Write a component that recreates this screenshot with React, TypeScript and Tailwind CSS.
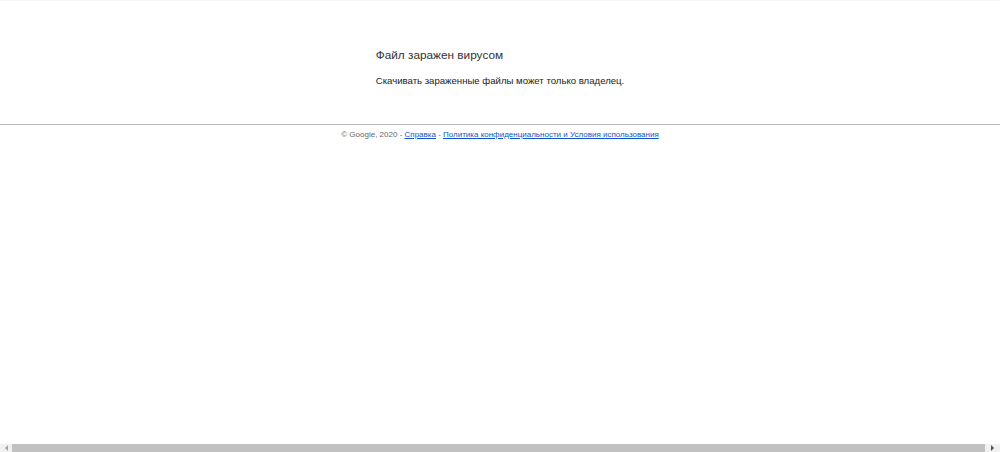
import React from "react";

export default function App() {
  return (
    <div className="flex h-[452px] w-[1000px] flex-col overflow-hidden bg-white" style={{ fontFamily: '"Liberation Sans", Arial, sans-serif' }}>
      <div className="h-px w-full bg-[#f4f4f4]" />
      <div className="flex-1">
        <div className="flex justify-center pt-[46px]">
          <div className="w-fit">
            <div className="text-[11.8px] leading-[16px] text-[#333]">Файл заражен вирусом</div>
            <div className="mt-[11px] whitespace-nowrap text-[9.6px] leading-[13px] text-[#222]">Скачивать зараженные файлы может только владелец.</div>
          </div>
        </div>
        <div className="mt-[37px] h-px w-full bg-[#bbbbbb]" />
        <div className="mt-[5px] text-center text-[8px] leading-[10px] text-[#666]">
          © Google, 2020 - <a className="text-[#1155cc] underline" href="#">Справка</a> - <a className="text-[#1155cc] underline" href="#">Политика конфиденциальности и Условия использования</a>
        </div>
      </div>
      <div className="flex h-[8px] w-full items-center bg-[#f1f1f1]">
        <div className="flex w-[12px] justify-center">
          <div className="h-0 w-0 border-y-[3px] border-r-[3px] border-y-transparent border-r-[#a3a3a3]" />
        </div>
        <div className="h-[8px] flex-1 bg-[#c1c1c1]" />
        <div className="flex w-[15px] justify-center">
          <div className="h-0 w-0 border-y-[3px] border-l-[3px] border-y-transparent border-l-[#505050]" />
        </div>
      </div>
    </div>
  );
}
